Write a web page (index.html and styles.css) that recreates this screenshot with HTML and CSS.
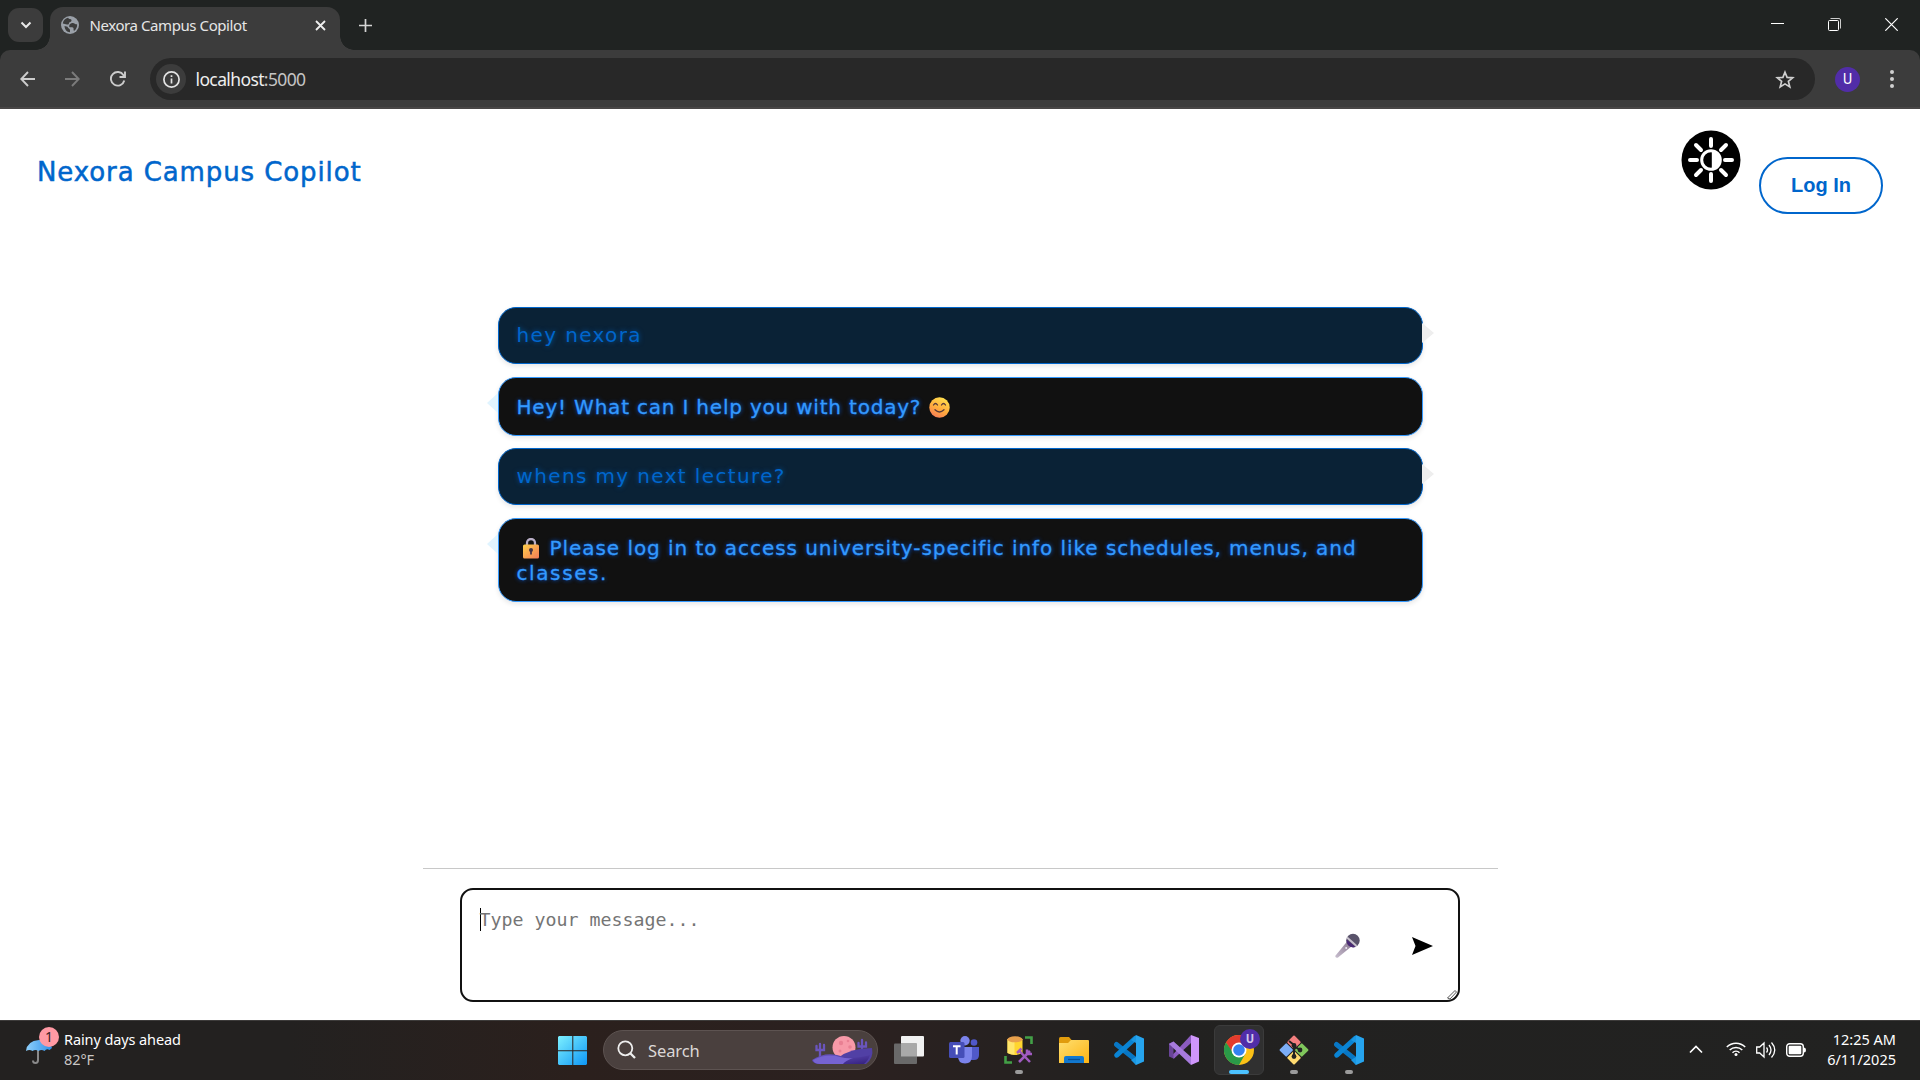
FILE: index.html
```html
<!DOCTYPE html>
<html lang="en">
<head>
<meta charset="utf-8">
<title>Nexora Campus Copilot</title>
<link rel="stylesheet" href="styles.css">
</head>
<body>
<svg class="defs" width="0" height="0">
  <defs>
    <linearGradient id="win" x1="0" y1="0" x2="30" y2="30" gradientUnits="userSpaceOnUse"><stop offset="0" stop-color="#7df0ff"/><stop offset="1" stop-color="#0a93f5"/></linearGradient>
    <linearGradient id="emoji" x1=".7" y1="0" x2=".2" y2="1"><stop offset="0" stop-color="#ffe04d"/><stop offset=".55" stop-color="#ffab3d"/><stop offset="1" stop-color="#f8795a"/></linearGradient>
    <linearGradient id="lock" x1="0" y1="0" x2="1" y2="1"><stop offset="0" stop-color="#ffd04a"/><stop offset="1" stop-color="#f47b58"/></linearGradient>
    <linearGradient id="mic" x1="1" y1="0" x2="0" y2="1"><stop offset="0" stop-color="#87758f"/><stop offset="1" stop-color="#c9bfcf"/></linearGradient>
    <linearGradient id="folder" x1="0" y1="0" x2="1" y2="1"><stop offset="0" stop-color="#ffdf70"/><stop offset="1" stop-color="#fdb414"/></linearGradient>
    <linearGradient id="umb" x1="0" y1="0" x2="1" y2="0"><stop offset="0" stop-color="#8fd0fb"/><stop offset="1" stop-color="#2e8fe8"/></linearGradient>
    <linearGradient id="dune" x1="0" y1="0" x2="1" y2="1"><stop offset="0" stop-color="#6d58c8"/><stop offset="1" stop-color="#33207c"/></linearGradient>
    <symbol id="vscode" viewBox="0 0 30 30">
      <path d="M2.500 9.500 22 25" stroke="#0877c5" stroke-width="5" stroke-linecap="round"/>
      <path d="M2.800 20.200 21 3.500" stroke="#0a84d4" stroke-width="5" stroke-linecap="round"/>
      <path d="M22 0l8 3.500v23L22 30l-2.500-3.500L22 22z" fill="#26a4ee"/>
      <path d="M22 0v8l-5-3zM22 30v-8l-5 3z" fill="#1a97e3"/>
    </symbol>
  </defs>
</svg>
<div class="browser">
  <div class="tabstrip">
    <div class="tab-search"><svg width="12" height="8" viewBox="0 0 12 8"><path d="M1.500 1.500 6 6l4.500-4.500" fill="none" stroke="#e8e8e8" stroke-width="2"/></svg></div>
    <div class="tab">
      <svg width="18" height="18" viewBox="0 0 18 18"><circle cx="9" cy="9" r="9" fill="#9aa0a8"/><path d="M7 1.800c1 2 3.500.5 3.500 2.700 0 1.800-2.500 1.300-2.500 2.800 0 1-.8 1.500-2 1.200L1.800 7.600C2 4.800 4.300 2.500 7 1.800zM11 7c2.500-.5 3 1.500 5.100 1.300.3 2.700-.9 5.300-3.100 6.700-1-2 .3-2.500-1.200-3.500-1.600-.8-3.800.8-3.600-1.500C8.300 8 9.500 7.500 11 7zM3.500 10l3 .8c.5 1.800 2.300 1.700 2.500 3.200v2.300c-3-.2-5.300-2.500-5.500-6.300z" fill="#3c3c3c"/></svg>
      <span class="tab-title">Nexora Campus Copilot</span>
      <svg width="11" height="11" viewBox="0 0 11 11"><path d="M1 1l9 9M10 1l-9 9" stroke="#eee" stroke-width="1.800"/></svg>
    </div>
    <svg class="new-tab" width="13" height="13" viewBox="0 0 13 13"><path d="M6.500 0v13M0 6.500h13" stroke="#d5d5d5" stroke-width="1.700"/></svg>
    <div class="window-controls">
      <svg width="13" height="13" viewBox="0 0 13 13"><path d="M0 5.500h13" stroke="#fff"/></svg>
      <svg width="13" height="13" viewBox="0 0 13 13" fill="none" stroke="#fff"><rect x=".5" y="2.500" width="10" height="10" rx="1"/><path d="M2.500.5H11a1.500 1.500 0 0 1 1.500 1.500v8.500" stroke="#ccc"/></svg>
      <svg width="13" height="13" viewBox="0 0 13 13"><path d="M.3.3l12.400 12.400M12.700.3.3 12.700" stroke="#fff" stroke-width="1.200"/></svg>
    </div>
  </div>
  <div class="toolbar">
    <svg width="15" height="16" viewBox="0 0 15 16" fill="none" stroke="#ccc" stroke-width="1.900"><path d="M15 8H1.500M8 1 1.300 8 8 15"/></svg>
    <svg width="15" height="16" viewBox="0 0 15 16" fill="none" stroke="#7b7b7b" stroke-width="1.900"><path d="M0 8h13.500M7 1l6.700 7L7 15"/></svg>
    <svg width="16" height="16" viewBox="0 0 16 16" fill="none" stroke="#ccc" stroke-width="1.900"><path d="M14.300 9.500A6.800 6.800 0 1 1 13.500 4.200L15 6M15 .5V6H9.500"/></svg>
    <div class="omnibox">
      <span class="site-info"><svg width="17" height="17" viewBox="0 0 17 17"><circle cx="8.500" cy="8.500" r="7.600" fill="none" stroke="#e3e3e3" stroke-width="1.700"/><path d="M8.500 7.500v5M8.500 4.300v1.800" stroke="#e3e3e3" stroke-width="1.700"/></svg></span>
      <span class="url">localhost<span class="port">:5000</span></span>
      <svg class="star" width="20" height="19" viewBox="0 0 20 19"><path d="M10 2.200l2.100 5.200 5.600.4-4.300 3.600 1.400 5.500L10 13.900l-4.800 3 1.400-5.500-4.300-3.600 5.600-.4z" fill="none" stroke="#d0d0d0" stroke-width="1.700"/></svg>
    </div>
    <span class="avatar">U</span>
    <svg width="4" height="18" viewBox="0 0 4 18" fill="#d0d0d0"><circle cx="2" cy="2" r="2"/><circle cx="2" cy="9" r="2"/><circle cx="2" cy="16" r="2"/></svg>
  </div>
</div>

<main class="page">
  <header class="header">
    <h1 class="brand">Nexora Campus Copilot</h1>
    <svg class="theme" width="60" height="60" viewBox="-30 -30 60 60">
      <circle r="29.500"/>
      <g stroke="#fff" stroke-width="4" stroke-linecap="round"><path d="M0-21v7M0 21v-7M-21 0h7M21 0h-7M-15-15l5 5M15 15l-5-5M15-15l-5 5M-15 15l5-5"/></g>
      <circle r="9.300" fill="none" stroke="#fff" stroke-width="3"/><path d="M.8-9v18a9 9 0 0 0 0-18z" fill="#fff"/>
    </svg>
    <button class="login">Log In</button>
  </header>
  <section class="messages">
    <div class="msg user">hey nexora</div>
    <div class="msg bot"><span class="reply">Hey! What can I help you with today?</span><svg class="smile" width="21" height="21" viewBox="0 0 21 21"><circle cx="10.500" cy="10.500" r="10.200" fill="url(#emoji)"/><path d="M4.500 8q2-3 4 0M12.500 8q2-3 4 0M6 12.800q4.500 4.500 9 0" fill="none" stroke="#5a3a3a" stroke-width="1.300" stroke-linecap="round"/></svg></div>
    <div class="msg user">whens my next lecture?</div>
    <div class="msg bot long"><svg class="padlock" width="16" height="21" viewBox="0 0 16 21"><path d="M4 9V5a4 4 0 0 1 8 0v4" fill="none" stroke="#b9aec6" stroke-width="2.300"/><rect y="6.500" width="16" height="14" rx="1.500" fill="url(#lock)"/><circle cx="8" cy="12" r="2" fill="#443244"/><path d="M8 12v4.500" stroke="#443244" stroke-width="1.800"/></svg>Please log in to access university-specific info like schedules, menus, and<br><span class="last-word">classes.</span></div>
  </section>
  <form class="composer">
    <div class="field">
      <span class="caret"></span><span class="placeholder">Type your message...</span>
      <svg class="mic" width="26" height="26" viewBox="0 0 26 26"><path d="M13.500 8 18 13 4 24.500q-2.500 1-2.800-1.500z" fill="url(#mic)"/><circle cx="19" cy="7.500" r="6.700" fill="#59536b"/><path d="M12.600 6.500a6.800 6.800 0 0 0 9 7.500z" fill="#4b2a76"/><path d="M13 4.500 22.500 13" stroke="#c9c2cf" stroke-width="2"/><circle cx="12.200" cy="15" r="1" fill="#efeaf3"/></svg>
      <svg class="send" width="21" height="18" viewBox="0 0 21 18"><path d="M0 0 21 9 0 18 3.500 9z"/></svg>
      <svg class="grip" width="10" height="10" viewBox="0 0 10 10"><path d="M.5 8 8 .5 9.500 2 3 9z" fill="#fff" stroke="#555"/></svg>
    </div>
  </form>
</main>

<footer class="taskbar">
  <div class="weather">
    <svg width="36" height="40" viewBox="0 0 36 40"><path d="M12 22v11q0 3-2.500 3T7 33.500" fill="none" stroke="#8a8a8a" stroke-width="2"/><path d="M0 24q1-10 13-11 12 1 13 8l-2.500 2q-3-2-5 1-3-2-6 0-3-2-6 0-3-2-6.500 0z" fill="url(#umb)"/></svg>
    <span class="count">1</span>
    <div class="weather-text"><span>Rainy days ahead</span><span class="temp">82°F</span></div>
  </div>
  <svg class="start" width="30" height="30" viewBox="0 0 30 30" fill="url(#win)"><path d="M1 0h13.300v14.300H0V1zM15.300 0H28l1 1v13.300H15.300zM0 15.300h14.300V29H1l-1-1zM15.300 15.300H29V28l-1 1H15.300z"/></svg>
  <div class="search">
    <svg width="20" height="20" viewBox="0 0 20 20" fill="none" stroke="#eee"><circle cx="8.300" cy="8.300" r="7" stroke-width="1.800"/><path d="M13.500 13.500 18 18" stroke-width="2.300"/></svg>
    <span class="search-label">Search</span>
    <svg class="moon" width="62" height="30" viewBox="0 0 62 30"><circle cx="32" cy="12.500" r="11.500" fill="#f799a8"/><g fill="#e98093"><circle cx="29" cy="8" r="2.200"/><circle cx="36" cy="6" r="1.300"/><circle cx="38" cy="12" r="1.800"/><circle cx="28" cy="16" r="1.500"/></g><path d="M8 22V9M4.500 11v4H12v-5M50 18V5M46.500 8v3.500H54V7.500" fill="none" stroke="#6a55bd" stroke-width="2.300" stroke-linecap="round"/><path d="M26 23q12-10 34-10 2 10-6 16H28z" fill="#5140a5"/><path d="M0 25q12-8 25-5 14 5 29 1l4-1q-2 6-6 9H8q-7 0-8-4z" fill="url(#dune)"/><path d="M1 25q14-7 27-3 8 2 13 1-8 3-10 6H8q-6 0-7-4z" fill="#7663d2"/></svg>
  </div>
  <div class="apps">
    <div class="app"><svg width="30" height="28" viewBox="0 0 30 28"><rect x="7" width="23" height="20.500" rx="1" fill="#f1f1f1"/><rect y="7.500" width="23" height="20.500" rx="1" fill="#696969"/><path d="M7 7.500h16v13H7z" fill="#a9a9a9"/></svg></div>
    <div class="app"><svg width="30" height="28" viewBox="0 0 30 28"><circle cx="25" cy="6.500" r="3.300" fill="#5058c8"/><path d="M20 11h10v8q0 5-5 5h-5z" fill="#5059c9"/><circle cx="16" cy="4.800" r="4.700" fill="#7b83eb"/><path d="M9 11h14v9q0 7.500-7 7.500T9 20z" fill="#7b83eb"/><rect y="6" width="15.500" height="16" rx="1.500" fill="#464eb8"/><path d="M4 10.200h7.500M7.700 10.200v8.300" stroke="#fff" stroke-width="2"/></svg></div>
    <div class="app running"><svg width="30" height="28" viewBox="0 0 30 28"><path d="M3.500 3v14q7.500 4 15 0V3z" fill="#ffd52e"/><path d="M3.500 3v14q3 1.500 7 1.800V4z" fill="#ffe66c"/><ellipse cx="11" cy="3.300" rx="7.500" ry="3" fill="#e8a04c"/><path d="M21 1.500h6.500V8M1.500 20v6.500H8" fill="none" stroke="#43a047" stroke-width="2.600"/><path d="M15 26 26 15M14.500 14 26 26M13 17l4.500-4.500M23 13.500V18h5" fill="none" stroke="#a05bc0" stroke-width="2.500"/></svg></div>
    <div class="app"><svg width="30" height="28" viewBox="0 0 30 28"><path d="M0 2.500Q0 1 1.500 1H10l3 3.500v5H0z" fill="#e19c0d"/><path d="M0 7h9l3-3h17q1 0 1 1v22H0z" fill="url(#folder)"/><path d="M5 27v-5q0-2 2-2h16q2 0 2 2v5z" fill="#1278cf"/><path d="M9 23.500h12" stroke="#074f96" stroke-width="1.300"/></svg></div>
    <div class="app"><svg width="30" height="30"><use href="#vscode"/></svg></div>
    <div class="app"><svg width="30" height="30" viewBox="0 0 30 30"><path d="M0 8.500 4.500 6.500 11 13v4.500l-6.500 6L0 21.500z" fill="#694497"/><path d="M4.500 11v8l4-4z" fill="#222"/><path d="M22 0 9 14l-4.500 5V24L22 8z" fill="#8c5cc0"/><path d="M4.500 6.500 0 9l22 21v-8z" fill="#a77bdd"/><path d="M22 0l8 3v23.500L22 30z" fill="#cf96fb"/></svg></div>
    <div class="app active"><svg width="30" height="30" viewBox="-15 -15 30 30"><circle r="15" fill="#fbc116"/><path d="M-13-7.500A15 15 0 0 1 13-7.500L0-7-6.500 3.500z" fill="#e33b2e"/><path d="M-13-7.500A15 15 0 0 0 0 15L6.500 3.500-5 4z" fill="#2a9a48"/><circle r="7.500" fill="#fff"/><circle r="5.800" fill="#3482f2"/></svg><span class="badge">U</span></div>
    <div class="app running"><svg width="30" height="30" viewBox="-15 -15 30 30"><g transform="rotate(45)"><rect x="-10.500" y="-10.500" width="10" height="10" rx="1" fill="#f47f7f"/><rect x=".5" y="-10.500" width="10" height="10" rx="1" fill="#80c75c"/><rect x="-10.500" y=".5" width="10" height="10" rx="1" fill="#7caef7"/><rect x=".5" y=".5" width="10" height="10" rx="1" fill="#ffda70"/></g><path d="M-5-9 0-5V7M0-4 6 0" stroke="#222" stroke-width="2" fill="none"/><g fill="#222"><circle cy="-4.500" r="2.400"/><circle cx="6" r="2.400"/><circle cy="6.500" r="2.400"/></g></svg></div>
    <div class="app running"><svg width="30" height="30"><use href="#vscode"/></svg></div>
  </div>
  <div class="tray">
    <svg class="up" width="14" height="9" viewBox="0 0 14 9"><path d="M1 7.500l6-6 6 6" fill="none" stroke="#fff" stroke-width="1.700"/></svg>
    <svg class="wifi" width="20" height="16" viewBox="0 0 20 16" fill="none" stroke="#fff" stroke-width="1.500"><path d="M.8 6a13 13 0 0 1 18.400 0M3.700 9a9 9 0 0 1 12.600 0M6.500 11.700a5 5 0 0 1 7 0"/><circle cx="10" cy="13.500" r="1.500" fill="#fff" stroke="none"/></svg>
    <svg class="sound" width="20" height="18" viewBox="0 0 20 18" fill="none" stroke="#fff" stroke-width="1.300"><path d="M.7 6h3L8 2v14l-4.300-4h-3zM10.500 6.500q2 2.500 0 5M13 4q4 5 0 10M15.500 1.500q6.500 7.500 0 15"/></svg>
    <svg class="battery" width="20" height="14" viewBox="0 0 20 14"><rect x=".7" y=".7" width="16.600" height="12.600" rx="3" fill="none" stroke="#fff" stroke-width="1.400"/><rect x="2.700" y="2.700" width="12.600" height="8.600" rx="1" fill="#fff"/><path d="M18 4.500q2 0 2 2.500t-2 2.500z" fill="#fff"/></svg>
    <div class="clock"><span>12:25 AM</span><span>6/11/2025</span></div>
  </div>
</footer>
</body>
</html>
```
FILE: styles.css
```css
* { box-sizing: border-box; }
body {
  margin: 0;
  height: 1080px;
  display: flex;
  flex-direction: column;
  overflow: hidden;
  background: #fff;
  font-family: "Noto Sans", "Open Sans", sans-serif;
}
svg { display: block; flex: none; }
.defs { position: absolute; }

/* browser frame */
.browser { background: #202322; height: 109px; flex: none; }
.tabstrip { display: flex; height: 50px; padding-left: 8px; }
.tab-search {
  width: 35px; height: 34px; margin-top: 8px;
  border-radius: 11px; background: #3c3c3c;
  display: flex; align-items: center; justify-content: center;
}
.tab {
  position: relative;
  width: 290px; height: 43px; margin: 7px 0 0 7px; padding: 0 14px 7px 11px;
  border-radius: 13px 13px 0 0; background: #3c3c3c;
  display: flex; align-items: center;
}
.tab::before, .tab::after {
  content: ""; position: absolute; bottom: 0; width: 14px; height: 14px;
}
.tab::before { left: -14px; background: radial-gradient(circle at 0 0, transparent 13.5px, #3c3c3c 14px); }
.tab::after { right: -14px; background: radial-gradient(circle at 100% 0, transparent 13.5px, #3c3c3c 14px); }
.tab-title { flex: 1; margin-left: 10.500px; font-size: 15px; letter-spacing: -.42px; color: #e6e6e6; white-space: nowrap; }
.new-tab { margin: 19px 0 0 19px; }
.window-controls { display: flex; gap: 44px; margin: 18px 22px 0 auto; }
.toolbar {
  height: 59px; padding: 8px 25px 7px 20px;
  border-radius: 10px 10px 0 0; background: #3c3c3c;
  border-bottom: 2px solid #484646;
  display: flex; align-items: center;
}
.toolbar > svg:nth-child(2) { margin-left: 30px; }
.toolbar > svg:nth-child(3) { margin-left: 30px; }
.omnibox {
  width: 1665px; height: 42px; margin-left: 24px; padding: 0 20px 0 6px;
  border-radius: 21px; background: #282828;
  display: flex; align-items: center;
}
.site-info { width: 30px; height: 30px; border-radius: 50%; background: #3c3c3c; display: grid; place-items: center; }
.url { margin-left: 9.500px; font-size: 17.500px; letter-spacing: -.62px; color: #eee; }
.port { color: #c4c4c4; }
.star { margin-left: auto; }
.avatar {
  width: 25px; height: 25px; margin: 0 30px 0 20px; border-radius: 50%;
  background: #512da8; color: #fff; font: 14px/25px Roboto, sans-serif; text-align: center;
}

/* page */
.page { height: 911px; flex: none; display: flex; flex-direction: column; align-items: center; }
.header { width: 100%; height: 198px; padding: 21px 37px 0 37px; display: flex; align-items: flex-start; }
.brand {
  margin: 22px auto 0 0; font: 400 26px/40px "DejaVu Sans", sans-serif; letter-spacing: .9px;
  color: #0066cc; -webkit-text-stroke: .5px #0066cc;
}
.theme { margin-right: 18.500px; }
.login {
  width: 124px; height: 57px; margin-top: 27px; padding: 0;
  border: 2px solid #0066cc; border-radius: 29px; background: #fff;
  color: #0066cc; font: bold 20px "Liberation Sans", Arial, sans-serif;
}
.messages { width: 925px; height: 561px; }
.msg {
  position: relative; height: 57px; margin-bottom: 13px; padding: 15px 18px;
  border: 1px solid #0066cc; border-radius: 18px; background: #0a2236;
  color: #0066cc; text-shadow: 0 0 5px rgba(0, 102, 204, .7);
  font: 20px/25px "DejaVu Sans", sans-serif; letter-spacing: 1.37px; white-space: nowrap;
  box-shadow: 0 2px 5px rgba(0, 0, 0, .1);
}
.msg.bot {
  height: 59px; margin-bottom: 12px; padding-top: 17px; background: #111;
  border-color: #3399ff; color: #3399ff; letter-spacing: .95px;
  text-shadow: 0 0 4px rgba(0, 102, 255, .9); -webkit-text-stroke: .3px #3399ff;
}
.msg.bot .reply { letter-spacing: .8px; }
.msg.bot .last-word { letter-spacing: 1.6px; }
.msg.long { height: 84px; }
.msg::after { content: ""; position: absolute; top: 15px; border: 10px solid transparent; }
.user::after { right: -12px; border-right: 0; border-left: 12px solid #eee; }
.bot::after { left: -12px; border-left: 0; border-right: 11px solid #e0f4ff; }
.smile, .padlock { display: inline-block; vertical-align: -4px; }
.smile { margin-left: 8px; }
.padlock { margin: 0 11px 0 6px; }

.composer { width: 1075px; border-top: 1px solid #c8c8c8; padding: 19px 38px 0 37px; }
.field {
  position: relative; width: 1000px; height: 114px; padding: 18px 18px;
  border: 2px solid #111; border-radius: 13px; display: flex;
}
.caret { width: 1px; height: 23px; background: #000; margin-right: -1px; }
.placeholder { font: 18.27px/24px "DejaVu Sans Mono", monospace; color: #757575; }
.mic { margin: 25px 52px 0 auto; }
.send { margin: 29px 7px 0 0; }
.grip { position: absolute; right: 1px; bottom: 0; }

/* taskbar */
.taskbar {
  height: 60px; flex: none; padding-left: 26px; border-top: 1px solid #3d3b3a;
  background: linear-gradient(90deg, #232120, #232120 15%, #2b201d 30%, #2b2120 45%, #222120 58%, #222221);
  display: flex; align-items: flex-start; color: #fff; font-size: 15px;
}
.weather { position: relative; display: flex; width: 532px; padding-top: 6px; }
.count {
  position: absolute; left: 13px; top: 6px; width: 20px; height: 20px; border-radius: 50%;
  background: #ff99a4; color: #3a2024; font-size: 14px; line-height: 20px; text-align: center;
}
.weather-text { display: flex; flex-direction: column; margin: 2px 0 0 2px; line-height: 20px; font-size: 14.5px; letter-spacing: -.1px; }
.temp { color: #c9c6c5; }
.start { margin-top: 15px; }
.search {
  width: 275px; height: 40px; margin: 9px 0 0 15px; padding: 0 3px 0 13px;
  border: 1px solid #5d5351; border-radius: 20px; background: #4a403e;
  display: flex; align-items: center;
}
.search-label { margin-left: 11px; font-size: 16.500px; letter-spacing: -.1px; color: #dcd8d7; }
.moon { margin-left: auto; }
.apps { display: flex; margin: 4px 0 0 6px; gap: 5px; }
.app { position: relative; width: 50px; height: 50px; border-radius: 6px; display: grid; place-items: center; }
.running::after, .active::after {
  content: ""; position: absolute; bottom: 1px; left: 21px; width: 8px; height: 4px; border-radius: 2px; background: #9b9b9b;
}
.active { background: #303030; border: 1px solid #3b3b3b; }
.active::after { left: 14px; width: 20px; background: #4cc2ff; bottom: 0; }
.badge {
  position: absolute; left: 25px; top: 3px; width: 20px; height: 20px; border-radius: 50%;
  background: #512da8; color: #d3c7ec; font: bold 12px/20px Roboto, sans-serif; text-align: center;
}
.tray { display: flex; margin-left: auto; padding-right: 24px; }
.up { margin-top: 24px; }
.wifi { margin: 20px 0 0 23px; }
.sound { margin: 20px 0 0 10px; }
.battery { margin: 22px 0 0 10px; }
.clock { display: flex; flex-direction: column; align-items: flex-end; width: 90px; margin-top: 8px; line-height: 20px; font-size: 14.5px; }
```
